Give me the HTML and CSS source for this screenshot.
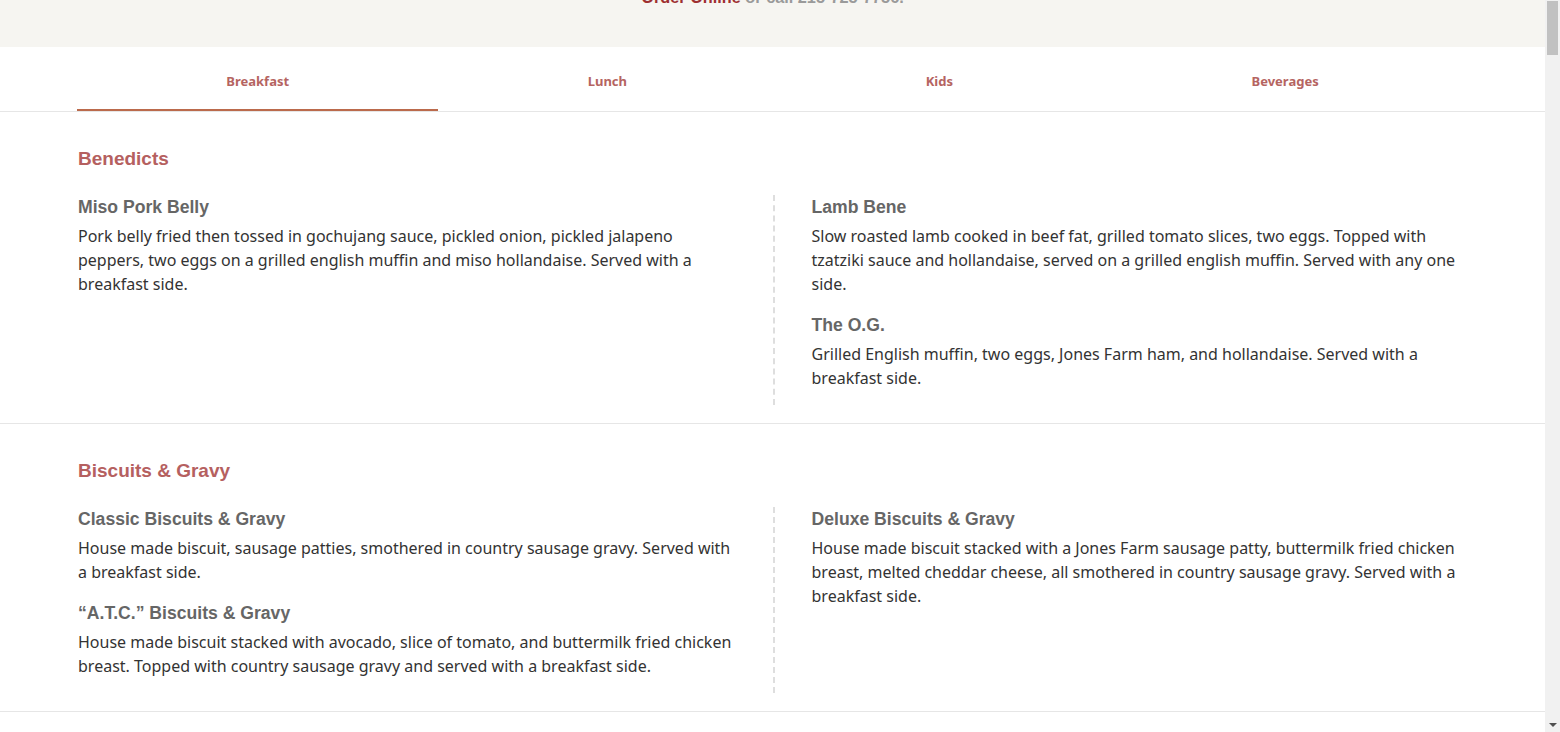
FILE: index.html
```html
<!DOCTYPE html>
<html lang="en">
<head>
<meta charset="utf-8">
<title>Menu</title>
<link rel="stylesheet" href="styles.css">
</head>
<body>
<div class="window">
<div class="page">
  <header class="top-band">
    <p class="order-line"><a class="order-link" href="#">Order Online</a> or call 215-725-7756.</p>
  </header>

  <nav class="tabs">
    <div class="tabs-inner">
      <a class="tab active" href="#">Breakfast</a>
      <a class="tab" href="#">Lunch</a>
      <a class="tab" href="#">Kids</a>
      <a class="tab" href="#">Beverages</a>
    </div>
  </nav>

  <section class="menu-section">
    <h2 class="section-title">Benedicts</h2>
    <div class="columns">
      <div class="col col-left">
        <div class="item">
          <h3 class="item-title">Miso Pork Belly</h3>
          <p class="item-desc">Pork belly fried then tossed in gochujang sauce, pickled onion, pickled jalapeno peppers, two eggs on a grilled english muffin and miso hollandaise. Served with a breakfast side.</p>
        </div>
      </div>
      <div class="col col-right">
        <div class="item">
          <h3 class="item-title">Lamb Bene</h3>
          <p class="item-desc">Slow roasted lamb cooked in beef fat, grilled tomato slices, two eggs. Topped with tzatziki sauce and hollandaise, served on a grilled english muffin. Served with any one side.</p>
        </div>
        <div class="item">
          <h3 class="item-title">The O.G.</h3>
          <p class="item-desc">Grilled English muffin, two eggs, Jones Farm ham, and hollandaise. Served with a breakfast side.</p>
        </div>
      </div>
    </div>
  </section>

  <section class="menu-section">
    <h2 class="section-title">Biscuits &amp; Gravy</h2>
    <div class="columns">
      <div class="col col-left">
        <div class="item">
          <h3 class="item-title">Classic Biscuits &amp; Gravy</h3>
          <p class="item-desc">House made biscuit, sausage patties, smothered in country sausage gravy. Served with a breakfast side.</p>
        </div>
        <div class="item">
          <h3 class="item-title">“A.T.C.” Biscuits &amp; Gravy</h3>
          <p class="item-desc">House made biscuit stacked with avocado, slice of tomato, and buttermilk fried chicken breast. Topped with country sausage gravy and served with a breakfast side.</p>
        </div>
      </div>
      <div class="col col-right">
        <div class="item">
          <h3 class="item-title">Deluxe Biscuits &amp; Gravy</h3>
          <p class="item-desc">House made biscuit stacked with a Jones Farm sausage patty, buttermilk fried chicken breast, melted cheddar cheese, all smothered in country sausage gravy. Served with a breakfast side.</p>
        </div>
      </div>
    </div>
  </section>
</div>
<div class="scrollbar" aria-hidden="true">
  <div class="scroll-thumb"></div>
  <div class="scroll-track"></div>
  <div class="scroll-arrow"></div>
</div>
</div>
</body>
</html>
```

FILE: styles.css
```css
html, body {
  margin: 0;
  padding: 0;
}

body {
  background: #ffffff;
  font-family: "Noto Sans", "Open Sans", sans-serif;
  color: #333333;
  overflow: hidden;
}

.window {
  display: flex;
  height: 732px;
  overflow: hidden;
}

.page {
  flex: 1 1 auto;
  min-width: 0;
  overflow: hidden;
}

/* scrollbar */
.scrollbar {
  flex: 0 0 15px;
  display: flex;
  flex-direction: column;
  background: #f1f1f1;
}

.scroll-thumb {
  height: 54px;
  margin: 1px 2px 0;
  background: #c1c1c1;
}

.scroll-track {
  flex: 1 1 auto;
}

.scroll-arrow {
  height: 15px;
  display: flex;
  align-items: center;
  justify-content: center;
}

.scroll-arrow::before {
  content: "";
  width: 0;
  height: 0;
  border-left: 4px solid transparent;
  border-right: 4px solid transparent;
  border-top: 4px solid #505050;
}

.top-band {
  background: #f6f5f1;
  height: 47px;
  overflow: hidden;
}

.order-line {
  margin: -13px 0 0;
  text-align: center;
  font-family: "Liberation Sans", Arial, sans-serif;
  font-weight: 700;
  font-size: 16.3px;
  line-height: 20px;
  color: #9a9a9a;
}

.order-link {
  color: #9e2f31;
  text-decoration: none;
}

.tabs {
  background: #ffffff;
  border-bottom: 1px solid #e6e6e6;
}

.tabs-inner {
  display: flex;
  padding: 0 77px;
}

.tab {
  flex: 1 1 auto;
  text-align: center;
  padding: 24px 0 18px;
  font-family: "Noto Sans", "Open Sans", sans-serif;
  font-weight: 700;
  font-size: 13px;
  line-height: 20px;
  color: #b56461;
  text-decoration: none;
  border-bottom: 2px solid transparent;
}

.tab.active {
  border-bottom-color: #bb6a4c;
}

.menu-section {
  border-bottom: 1px solid #e6e6e6;
  padding: 35px 78px 18px;
}

.section-title {
  margin: 0 0 25px;
  font-family: "Liberation Sans", Arial, sans-serif;
  font-weight: 700;
  font-size: 19px;
  line-height: 23px;
  color: #b5605f;
}

.columns {
  display: grid;
  grid-template-columns: 1fr 1fr;
}

.col {
  padding-bottom: 15px;
}

.col-left {
  padding-right: 39px;
}

.col-right {
  border-left: 2px dashed #dedede;
  padding-left: 37px;
}

.item + .item {
  margin-top: 17px;
}

.item-title {
  margin: 0;
  font-family: "Liberation Sans", Arial, sans-serif;
  font-weight: 700;
  font-size: 17.6px;
  line-height: 24px;
  color: #666666;
}

.item-desc {
  margin: 5px 0 0;
  font-family: "Noto Sans", "Open Sans", sans-serif;
  font-size: 16px;
  line-height: 24px;
  color: #333333;
}
```
